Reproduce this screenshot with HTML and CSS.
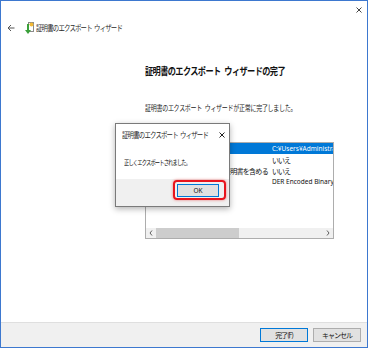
FILE: index.html
```html
<!DOCTYPE html>
<html lang="ja">
<head>
<meta charset="utf-8">
<title>証明書のエクスポート ウィザード</title>
<link rel="stylesheet" href="styles.css">
</head>
<body>
<div class="window">
  <div class="topbar">
    <svg class="close" width="6" height="6" viewBox="0 0 6 6"><path d="M0.5 0.5L5.5 5.5M5.5 0.5L0.5 5.5" stroke="#444" stroke-width="1"/></svg>
  </div>
  <div class="header">
    <svg class="back" width="8" height="8" viewBox="0 0 8 8"><path d="M7.5 4H1M4 1L1 4L4 7" stroke="#555" stroke-width="1" fill="none"/></svg>
    <svg class="certicon" width="9" height="14" viewBox="0 0 9 14">
      <rect x="3.5" y="1.5" width="5" height="9" fill="#fff" stroke="#8a8a8a"/>
      <rect x="4.5" y="3" width="3" height="1" fill="#9bb"/>
      <circle cx="6.5" cy="3.5" r="2" fill="#f2b935"/>
      <path d="M2 3V9H0L3 13L6 9H4V3Z" fill="#3aa03a"/>
    </svg>
    <span class="title sx">証明書のエクスポート ウィザード</span>
  </div>
  <div class="content">
    <div class="heading"><span class="sx">証明書のエクスポート ウィザードの完了</span></div>
    <div class="message"><span class="sx">証明書のエクスポート ウィザードが正常に完了しました。</span></div>
    <div class="list">
      <div class="row selected"><span class="label">ファイル名</span><span class="value latin">C:¥Users¥Administrator¥Desktop¥cert.cer</span></div>
      <div class="row"><span class="label">キーのエクスポート</span><span class="value">いいえ</span></div>
      <div class="row"><span class="label">証明のパスにあるすべての証明書を含める</span><span class="value">いいえ</span></div>
      <div class="row"><span class="label">ファイルの形式</span><span class="value latin">DER Encoded Binary X.509 (*.cer)</span></div>
      <div class="hscroll">
        <span class="arrow"><svg width="4" height="6" viewBox="0 0 4 6"><path d="M3 0.5L1 3L3 5.5" stroke="#606060" fill="none"/></svg></span>
        <span class="thumb"></span>
        <span class="track"></span>
        <span class="arrow"><svg width="4" height="6" viewBox="0 0 4 6"><path d="M1 0.5L3 3L1 5.5" stroke="#606060" fill="none"/></svg></span>
      </div>
    </div>
  </div>
  <div class="footer">
    <button class="btn primary">完了(F)</button>
    <button class="btn">キャンセル</button>
  </div>

  <div class="dialog">
    <div class="dlg-title">
      <span class="dlg-name"><span class="title sx">証明書のエクスポート ウィザード</span></span>
      <svg class="dlg-x" width="6" height="6" viewBox="0 0 6 6"><path d="M0.5 0.5L5.5 5.5M5.5 0.5L0.5 5.5" stroke="#222" stroke-width="1"/></svg>
    </div>
    <div class="dlg-body"><span class="dlg-msg sx">正しくエクスポートされました。</span></div>
    <div class="dlg-foot">
      <span class="ok-wrap"><button class="btn primary ok">OK</button></span>
    </div>
  </div>
</div>
</body>
</html>
```

FILE: styles.css
```css
html, body {
  margin: 0;
  padding: 0;
  background: #fff;
}
body {
  font-family: "Noto Sans CJK JP", "Noto Sans", sans-serif;
  color: #222;
}
.sx {
  display: inline-block;
  transform-origin: 0 50%;
  white-space: nowrap;
}
.window {
  position: relative;
  width: 366px;
  height: 346px;
  border: 1px solid #3d78cf;
  display: flex;
  flex-direction: column;
  background: #fff;
}
.topbar {
  height: 18px;
  display: flex;
  justify-content: flex-end;
  align-items: center;
  padding-right: 5px;
}
.header {
  margin-top: 2px;
  height: 14px;
  display: flex;
  align-items: center;
  padding-left: 6px;
}
.back { margin-right: 10px; flex: none; }
.certicon { margin-right: 2px; flex: none; }
.title {
  font-size: 8px;
  letter-spacing: -1px;
  word-spacing: 2px;
  line-height: 14px;
  color: #2a2a2a;
  transform: scaleX(0.8);
}
.content {
  padding-left: 144px;
}
.heading {
  margin-top: 30px;
  height: 12px;
  font-size: 10px;
  font-weight: bold;
  letter-spacing: -0.75px;
  word-spacing: 3px;
  line-height: 12px;
  color: #111;
}
.heading .sx { transform: scaleX(0.82); }
.message {
  margin-top: 26px;
  height: 10px;
  font-size: 7.5px;
  letter-spacing: -0.35px;
  word-spacing: 2px;
  line-height: 10px;
  color: #222;
}
.message .sx { transform: scaleX(0.8); }
.list {
  margin-top: 29px;
  width: 189px;
  height: 97px;
  box-sizing: border-box;
  border: 1px solid #adadad;
  display: flex;
  flex-direction: column;
  overflow: hidden;
}
.row {
  height: 11px;
  display: flex;
  align-items: center;
  font-size: 7px;
  color: #111;
  white-space: nowrap;
  overflow: hidden;
}
.row.selected {
  background: #0078d7;
  color: #fff;
}
.label {
  flex: none;
  width: 123px;
  padding-left: 3px;
  letter-spacing: -0.7px;
  overflow: hidden;
}
.value {
  flex: 1;
  overflow: hidden;
  letter-spacing: -1px;
}
.value.latin {
  font-family: "Noto Sans", sans-serif;
  font-size: 6.5px;
  letter-spacing: 0;
}
.hscroll {
  margin-top: auto;
  height: 10px;
  display: flex;
  background: #f0f0f0;
}
.arrow {
  width: 10px;
  display: flex;
  align-items: center;
  justify-content: center;
}
.thumb {
  width: 83px;
  background: #cdcdcd;
}
.track { flex: 1; }
.footer {
  margin-top: auto;
  height: 25px;
  box-sizing: border-box;
  border-top: 1px solid #dfdfdf;
  background: #f0f0f0;
  display: flex;
  justify-content: flex-end;
  align-items: flex-start;
  gap: 5px;
  padding: 5px 6px 0 0;
}
.btn {
  width: 48px;
  height: 14px;
  box-sizing: border-box;
  border: 1px solid #adadad;
  background: #e1e1e1;
  font-family: "Noto Sans CJK JP", sans-serif;
  font-size: 7px;
  letter-spacing: -1px;
  line-height: 11px;
  padding: 0;
  color: #111;
}
.btn.primary {
  border-color: #0078d7;
}
.dialog {
  position: absolute;
  left: 114px;
  top: 122px;
  width: 115px;
  height: 84px;
  box-sizing: border-box;
  border: 1px solid #7a7a7a;
  background: #fff;
  box-shadow: 0 2px 6px rgba(0, 0, 0, 0.3);
  display: flex;
  flex-direction: column;
}
.dlg-title {
  height: 21px;
  display: flex;
  align-items: center;
  padding: 0 4px 0 6px;
}
.dlg-name {
  flex: 1;
  min-width: 0;
  display: flex;
  align-items: center;
}
.dlg-x { flex: none; }
.dlg-body {
  flex: 1;
  display: flex;
  align-items: center;
  padding-left: 8px;
}
.dlg-msg {
  font-size: 7px;
  letter-spacing: -1.1px;
  line-height: 10px;
  color: #111;
  transform: scaleX(0.75);
}
.dlg-foot {
  height: 27px;
  box-sizing: border-box;
  background: #f0f0f0;
  display: flex;
  justify-content: flex-end;
  align-items: flex-start;
  padding: 5px 10px 0 0;
}
.ok-wrap {
  position: relative;
  display: block;
}
.btn.ok {
  display: block;
  width: 42px;
  height: 13px;
  font-family: "Noto Sans", sans-serif;
  font-size: 6.5px;
  letter-spacing: 0;
}
.ok-wrap::after {
  content: "";
  position: absolute;
  left: -4px;
  right: -7px;
  top: -4px;
  bottom: -3px;
  border: 2px solid #e8141c;
  border-radius: 4px;
  box-shadow: 0 0 3px rgba(230, 0, 0, 0.5);
}
```
